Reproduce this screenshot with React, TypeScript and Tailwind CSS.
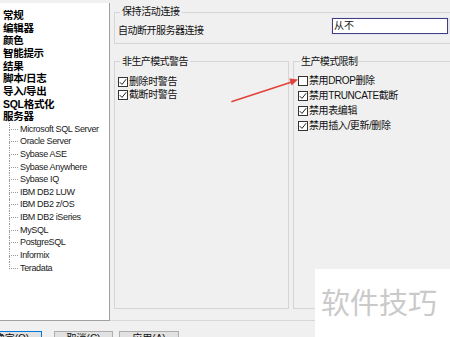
import React from 'react';

const TOP_ITEMS = ['常规', '编辑器', '颜色', '智能提示', '结果', '脚本/日志', '导入/导出', 'SQL格式化', '服务器'];

const SERVERS = [
  'Microsoft SQL Server',
  'Oracle Server',
  'Sybase ASE',
  'Sybase Anywhere',
  'Sybase IQ',
  'IBM DB2 LUW',
  'IBM DB2 z/OS',
  'IBM DB2 iSeries',
  'MySQL',
  'PostgreSQL',
  'Informix',
  'Teradata',
];

const cjk = "font-['Liberation_Sans','Noto_Sans_CJK_SC',sans-serif]";

const Check: React.FC<{ checked?: boolean }> = ({ checked }) => (
  <span className="flex h-[10px] w-[10px] shrink-0 items-center justify-center border border-[#333333] bg-white">
    {checked && (
      <svg width="8" height="8" viewBox="0 0 8 8">
        <path d="M0.8 4.2 L3 6.4 L7.2 1.2" fill="none" stroke="#222" strokeWidth="1" />
      </svg>
    )}
  </span>
);

const CheckRow: React.FC<{ label: string; checked?: boolean; h: string }> = ({ label, checked, h }) => (
  <div className={`flex items-center gap-[1px] ${h}`}>
    <Check checked={checked} />
    <span className="text-[10px] leading-[12px] tracking-[-0.4px] text-[#111]">{label}</span>
  </div>
);

const App: React.FC = () => {
  return (
    <div className={`relative flex h-[337px] w-[450px] flex-col overflow-hidden bg-[#f0f0f0] ${cjk}`}>
      <div className="flex h-[321px]">
        {/* Tree */}
        <div className="mt-[3px] h-[318px] w-[110px] shrink-0 border-r border-b border-[#a0a0a0] bg-white pt-[6px]">
          {TOP_ITEMS.map((t) => (
            <div key={t} className="flex h-[12.65px] items-center pl-[3px] text-[10.5px] font-bold leading-none tracking-[-0.3px] text-black">
              {t}
            </div>
          ))}
          {SERVERS.map((s, i) => (
            <div key={s} className="flex h-[12.65px] items-stretch">
              <div className="w-[9px]" />
              <div className="flex w-[9px] flex-col">
                <div className="flex-1 border-l border-b border-dotted border-[#9a9a9a]" />
                <div className={`flex-1 ${i < SERVERS.length - 1 ? 'border-l border-dotted border-[#9a9a9a]' : ''}`} />
              </div>
              <span className="ml-[2px] self-center font-['Liberation_Sans',sans-serif] text-[9px] leading-none tracking-[-0.35px] text-[#1a1a1a]">
                {s}
              </span>
            </div>
          ))}
        </div>

        {/* Settings */}
        <div className="flex h-[321px] w-[360px] shrink-0 flex-col border-b border-[#d8d8d8] pl-[4px] pt-[6px]">
          <fieldset className="h-[38px] w-[356px] border border-[#d5d5d5]">
            <legend className="ml-[5px] px-[2px] text-[10px] leading-[12px] tracking-[-0.4px] text-[#111]">保持活动连接</legend>
            <div className="flex items-start pl-[3px]">
              <span className="mt-[7px] w-[214px] text-[10px] leading-[12px] tracking-[-0.5px] text-[#111]">自动断开服务器连接</span>
              <div className="flex h-[16px] w-[116px] items-center border border-[#40407e] bg-white pl-[1px] text-[10px] leading-[12px] text-[#111] shadow-[0_0_0_1px_#e4e4f4]">
                从不
              </div>
              <div className="ml-[1px] h-[16px] w-[16px] bg-[#e6e6e6]" />
            </div>
          </fieldset>

          <div className="mt-[11px] flex gap-[4px]">
            <fieldset className="h-[254px] w-[175px] shrink-0 border border-[#d5d5d5]">
              <legend className="ml-[5px] px-[2px] text-[10px] leading-[13px] tracking-[-0.6px] text-[#111]">非生产模式警告</legend>
              <div className="flex flex-col pl-[3px] pt-[7px]">
                <CheckRow label="删除时警告" checked h="h-[13px]" />
                <CheckRow label="截断时警告" checked h="h-[13px]" />
              </div>
            </fieldset>
            <fieldset className="h-[254px] w-[180px] shrink-0 border border-[#d5d5d5]">
              <legend className="ml-[6px] px-[1px] text-[10px] leading-[13px] tracking-[-0.6px] text-[#111]">生产模式限制</legend>
              <div className="flex flex-col pl-[4px] pt-[5px]">
                <CheckRow label="禁用DROP删除" h="h-[15px]" />
                <CheckRow label="禁用TRUNCATE截断" checked h="h-[15px]" />
                <CheckRow label="禁用表编辑" checked h="h-[15px]" />
                <CheckRow label="禁用插入/更新/删除" checked h="h-[15px]" />
              </div>
            </fieldset>
          </div>
        </div>
      </div>

      {/* Buttons */}
      <div className="flex pt-[10px] text-[10px] leading-[12px] text-[#111]">
        <div className="ml-[-18px] flex h-[22px] w-[60px] justify-center border border-[#0078d7] bg-[#e1e1e1] pt-[1px]">确定(O)</div>
        <div className="ml-[12px] flex h-[22px] w-[59px] justify-center border border-[#adadad] bg-[#e1e1e1] pt-[1px]">取消(C)</div>
        <div className="ml-[6px] flex h-[22px] w-[60px] justify-center border border-[#adadad] bg-[#e1e1e1] pt-[1px]">应用(A)</div>
      </div>

      {/* Watermark */}
      <div className="absolute left-[315px] top-[269px] h-[68px] w-[135px] bg-white pl-[6px] pt-[18px]">
        <span className="font-['Noto_Sans_CJK_SC',sans-serif] text-[29px] leading-none tracking-[0px] text-[#cacaca]">软件技巧</span>
      </div>

      {/* Annotation arrow */}
      <svg className="pointer-events-none absolute left-0 top-0" width="450" height="337" viewBox="0 0 450 337">
        <path d="M232 101.5 L291 82.3" stroke="#e2423c" strokeWidth="1.7" strokeLinecap="round" fill="none" />
        <polygon points="298,79.5 289.3,78.5 291.6,85.6" fill="#e2423c" />
      </svg>
    </div>
  );
};

export default App;
